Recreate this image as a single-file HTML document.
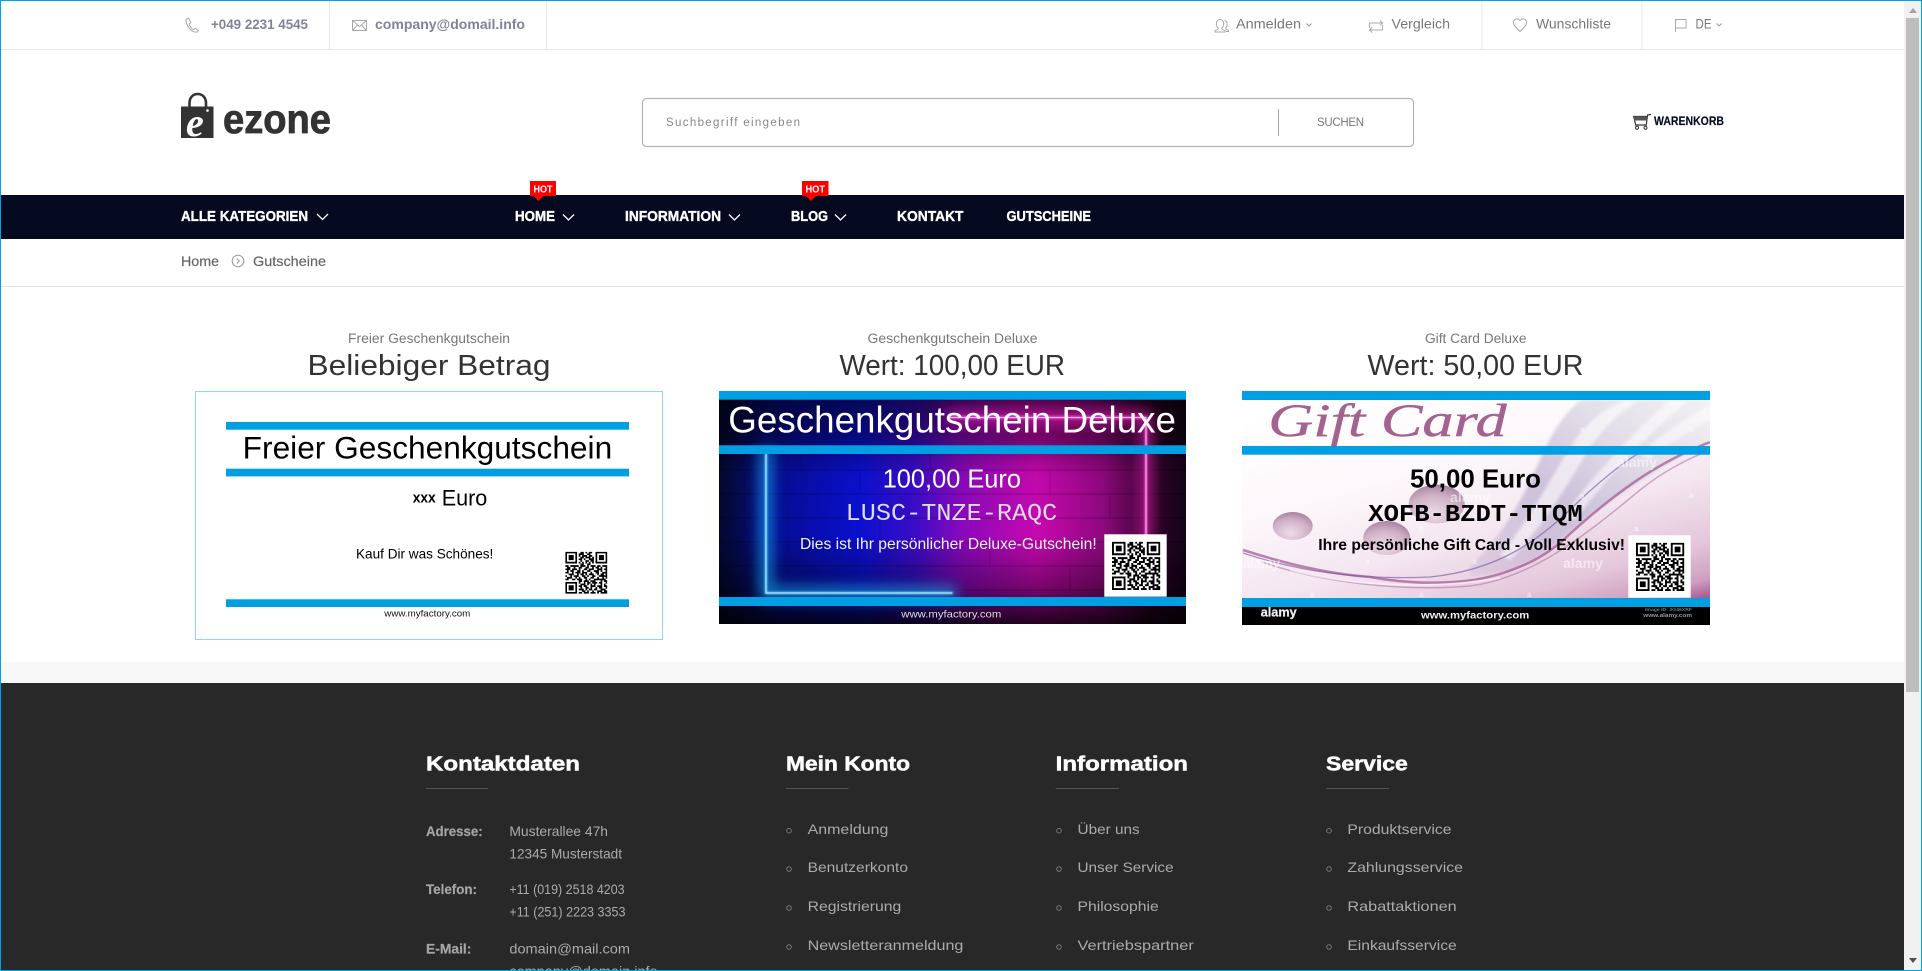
<!DOCTYPE html>
<html lang="de">
<head>
<meta charset="utf-8">
<title>Gutscheine – ezone</title>
<style>
html,body{margin:0;padding:0;width:1922px;height:971px;overflow:hidden;background:#fff}
svg{display:block}
text{font-family:"Liberation Sans",Arial,sans-serif;white-space:pre}
.tb{font-size:14px;font-weight:700;fill:#80829c}
.tr{font-size:13.5px;fill:#777}
.ln{fill:none;stroke:#a8a8a8;stroke-width:1}
.nv{font-size:14.5px;font-weight:700;fill:#fff;stroke:#fff;stroke-width:.35}
.cv{fill:none;stroke:#fff;stroke-width:1.3}
.hot{font-size:10px;font-weight:700;fill:#fff}
.bc{font-size:14px;fill:#666;stroke:#666;stroke-width:.2}
.sub{font-size:13.5px;fill:#777}
.big{font-size:28.500px;fill:#333}
.fh{font-size:20.500px;font-weight:700;fill:#fff;stroke:#fff;stroke-width:.5}
.fl{font-size:13.5px;font-weight:700;fill:#a5a5a5;stroke:#a5a5a5;stroke-width:.2}
.ft{font-size:14px;fill:#ababab}
.fk{font-size:14px;fill:#ababab}
.bu{fill:none;stroke:#777;stroke-width:1}
.ul{stroke:#555;stroke-width:1}
</style>
</head>
<body>
<svg width="1922" height="971" viewBox="0 0 1922 971" xmlns="http://www.w3.org/2000/svg">
<defs>
<symbol id="qr" viewBox="0 0 25 25">
<path fill="none" stroke="#000" stroke-width="1" d="M0 .5h7M9 .5h2M12 .5h1M14 .5h2M18 .5h7M0 1.5h1M6 1.5h1M8 1.5h3M13 1.5h2M18 1.5h1M24 1.5h1M0 2.5h1M2 2.5h3M6 2.5h1M8 2.5h1M10 2.5h3M14 2.5h2M18 2.5h1M20 2.5h3M24 2.5h1M0 3.5h1M2 3.5h3M6 3.5h1M9 3.5h2M12 3.5h3M16 3.5h1M18 3.5h1M20 3.5h3M24 3.5h1M0 4.5h1M2 4.5h3M6 4.5h1M8 4.5h2M11 4.5h1M14 4.5h3M18 4.5h1M20 4.5h3M24 4.5h1M0 5.5h1M6 5.5h1M9 5.5h1M12 5.5h2M15 5.5h2M18 5.5h1M24 5.5h1M0 6.5h7M8 6.5h1M10 6.5h1M12 6.5h1M14 6.5h1M16 6.5h1M18 6.5h7M9 7.5h2M13 7.5h2M0 8.5h2M3 8.5h4M7 8.5h1M9 8.5h3M13 8.5h1M15 8.5h3M19 8.5h2M22 8.5h3M1 9.5h2M5 9.5h1M8 9.5h2M12 9.5h2M16 9.5h1M18 9.5h2M21 9.5h1M24 9.5h1M0 10.5h3M4 10.5h3M8 10.5h1M11 10.5h2M14 10.5h3M19 10.5h3M23 10.5h2M1 11.5h1M3 11.5h2M7 11.5h2M10 11.5h1M13 11.5h2M17 11.5h3M21 11.5h1M24 11.5h1M0 12.5h2M4 12.5h1M6 12.5h3M10 12.5h3M15 12.5h1M18 12.5h2M22 12.5h3M2 13.5h3M7 13.5h1M9 13.5h2M12 13.5h1M14 13.5h3M19 13.5h1M21 13.5h2M24 13.5h1M0 14.5h1M3 14.5h1M5 14.5h3M10 14.5h2M13 14.5h1M16 14.5h2M20 14.5h3M23 14.5h2M1 15.5h3M6 15.5h1M8 15.5h1M11 15.5h2M15 15.5h2M19 15.5h1M22 15.5h1M24 15.5h1M0 16.5h2M4 16.5h2M7 16.5h3M12 16.5h1M14 16.5h1M17 16.5h7M8 17.5h2M11 17.5h3M15 17.5h2M17 17.5h1M21 17.5h1M23 17.5h2M0 18.5h7M8 18.5h1M11 18.5h1M13 18.5h2M16 18.5h2M18 18.5h1M20 18.5h2M24 18.5h1M0 19.5h1M6 19.5h1M9 19.5h3M13 19.5h1M15 19.5h1M17 19.5h1M21 19.5h1M23 19.5h1M0 20.5h1M2 20.5h3M6 20.5h1M8 20.5h2M11 20.5h2M15 20.5h3M19 20.5h3M23 20.5h2M0 21.5h1M2 21.5h3M6 21.5h1M9 21.5h1M12 21.5h2M15 21.5h1M18 21.5h1M20 21.5h2M24 21.5h1M0 22.5h1M2 22.5h3M6 22.5h1M8 22.5h3M12 22.5h1M14 22.5h2M17 22.5h2M21 22.5h2M23 22.5h1M0 23.5h1M6 23.5h1M10 23.5h2M13 23.5h1M16 23.5h1M19 23.5h3M23 23.5h2M0 24.5h7M8 24.5h2M11 24.5h3M15 24.5h3M19 24.5h1M21 24.5h4"/>
</symbol>
<linearGradient id="dxH" x1="0" x2="1" y1="0" y2="0">
<stop offset="0" stop-color="#04082c"/><stop offset=".12" stop-color="#060c90"/><stop offset=".3" stop-color="#0a10d0"/><stop offset=".42" stop-color="#3a0cc8"/><stop offset=".52" stop-color="#8a08bc"/><stop offset=".68" stop-color="#c808b0"/><stop offset=".82" stop-color="#900880"/><stop offset=".93" stop-color="#300428"/><stop offset="1" stop-color="#14031a"/>
</linearGradient>
<linearGradient id="dxV" x1="0" x2="0" y1="0" y2="1">
<stop offset="0" stop-color="#000" stop-opacity=".6"/><stop offset=".2" stop-color="#000" stop-opacity=".4"/><stop offset=".36" stop-color="#000" stop-opacity=".03"/><stop offset=".62" stop-color="#000" stop-opacity="0"/><stop offset=".85" stop-color="#000" stop-opacity=".4"/><stop offset="1" stop-color="#000" stop-opacity=".82"/>
</linearGradient>
<linearGradient id="gcBg" x1=".22" y1="0" x2=".78" y2="1">
<stop offset="0" stop-color="#fff"/><stop offset=".32" stop-color="#fdf8fb"/><stop offset=".6" stop-color="#f4e6f0"/><stop offset=".82" stop-color="#e4c6da"/><stop offset=".94" stop-color="#cf9fc0"/><stop offset="1" stop-color="#a85c92"/>
</linearGradient>
<linearGradient id="sw" x1="0" y1="1" x2="1" y2="0">
<stop offset="0" stop-color="#b4a2c8" stop-opacity=".2"/><stop offset=".4" stop-color="#c8bcd8" stop-opacity=".9"/><stop offset=".7" stop-color="#e2dee8"/><stop offset="1" stop-color="#f4f0f4"/>
</linearGradient>
<radialGradient id="ball" cx=".45" cy=".75" r=".8">
<stop offset="0" stop-color="#ecdde8"/><stop offset=".6" stop-color="#cfb0c6"/><stop offset="1" stop-color="#a07a98"/>
</radialGradient>
<filter id="gl" x="-30%" y="-30%" width="160%" height="160%"><feGaussianBlur stdDeviation="7"/></filter>
<filter id="gs" x="-30%" y="-30%" width="160%" height="160%"><feGaussianBlur stdDeviation="1"/></filter>
<filter id="sb" x="-10%" y="-10%" width="120%" height="120%"><feGaussianBlur stdDeviation="1.500"/></filter>
<filter id="qb"><feGaussianBlur stdDeviation=".25"/></filter>
<clipPath id="cDx"><rect x="719" y="391" width="467" height="233"/></clipPath>
<clipPath id="cGc"><rect x="1242" y="391" width="468" height="234"/></clipPath>
<clipPath id="cBag"><path d="M181 107h32v31h-32z"/></clipPath>
</defs>

<rect width="1922" height="971" fill="#fff"/>

<!-- top bar -->
<line x1="1" y1="49.5" x2="1904" y2="49.5" stroke="#e6e6e6"/>
<line x1="329.5" y1="1" x2="329.5" y2="49" stroke="#e8e8e8"/>
<line x1="546.5" y1="1" x2="546.5" y2="49" stroke="#e8e8e8"/>
<line x1="1482" y1="1" x2="1482" y2="49" stroke="#e8e8e8"/>
<line x1="1642" y1="1" x2="1642" y2="49" stroke="#e8e8e8"/>
<path class="ln" d="M186 19.5l2.6-1.2 2.2 4.2-1.8 1.5c.8 2.6 2.4 4.6 4.6 5.8l1.7-1.6 3.2 2.3-1.7 1.6c-5.2.6-11-6.6-10.8-12.6z"/>
<text class="tb" x="211" y="29" textLength="97" lengthAdjust="spacingAndGlyphs">+049 2231 4545</text>
<path class="ln" d="M352.5 20.5h14v10h-14zM352.5 20.5l7 6 7-6M352.5 30.5l5-5.5M366.5 30.500l-5-5.5"/>
<text class="tb" x="375" y="29" textLength="150" lengthAdjust="spacingAndGlyphs">company@domail.info</text>
<path class="ln" d="M1220 19.5c2.4 0 3.6 1.800 3.6 4.2 0 2-.8 3.500-1.800 4.300l.4 1.400 2.800 1.200v1.400h-10v-1.400l2.800-1.200.4-1.400c-1-.8-1.800-2.300-1.800-4.300 0-2.400 1.200-4.200 3.600-4.200zM1224.500 20.500c1.800.4 2.700 1.900 2.700 3.600 0 1.800-.7 3.100-1.500 3.800l.3 1.300 2.500 1.100v1.200h-2.500"/>
<text class="tr" x="1236" y="28.500" textLength="65" lengthAdjust="spacingAndGlyphs">Anmelden</text>
<path d="M1306.500 23.500l2.500 2.500 2.500-2.500" fill="none" stroke="#999"/>
<path class="ln" d="M1369.500 28v-5h12.500M1380 20.500l2.500 2.500-2.500 2.500M1382.500 25v5h-12.500M1372 27.500l-2.500 2.500 2.500 2.500"/>
<text class="tr" x="1391.500" y="28.500" textLength="58.500" lengthAdjust="spacingAndGlyphs">Vergleich</text>
<path class="ln" d="M1520 31.500c-3-3-6.500-6-6.500-9 0-2.200 1.600-3.600 3.400-3.600 1.300 0 2.400.7 3.100 1.900.7-1.200 1.800-1.900 3.100-1.900 1.800 0 3.400 1.400 3.400 3.600 0 3-3.500 6-6.500 9z"/>
<text class="tr" x="1536" y="28.500" textLength="75" lengthAdjust="spacingAndGlyphs">Wunschliste</text>
<path class="ln" d="M1675.500 32V19.500h10.500v8.500h-10.500"/>
<text class="tr" x="1695.500" y="28.500" textLength="16" lengthAdjust="spacingAndGlyphs" style="font-size:14px">DE</text>
<path d="M1716.500 23.500l2.500 2.500 2.500-2.500" fill="none" stroke="#999"/>

<!-- logo -->
<path d="M189.500 107v-4c0-12 16.500-12 16.500 0v4" fill="none" stroke="#333" stroke-width="2.6"/>
<path d="M181 106.500h32.500v31.500H181z" fill="#333"/>
<circle cx="207.500" cy="110.500" r="1.300" fill="#fff"/>
<g clip-path="url(#cBag)"><text x="186" y="136" style="font-family:'Liberation Serif',serif;font-style:italic;font-weight:700;font-size:40px;fill:#fff">e</text></g>
<text x="223" y="133" textLength="108" lengthAdjust="spacingAndGlyphs" style="font-size:41px;font-weight:700;fill:#333;stroke:#333;stroke-width:.8">ezone</text>

<!-- search -->
<rect x="642.500" y="98.500" width="771" height="48" rx="4" fill="#fff" stroke="#b2b2b2" stroke-width="1.2"/>
<line x1="1278.500" y1="109" x2="1278.500" y2="136" stroke="#aaa"/>
<text x="666" y="126" textLength="134" style="font-size:11.500px;fill:#888">Suchbegriff eingeben</text>
<text x="1317" y="126" textLength="47" style="font-size:11.500px;fill:#777">SUCHEN</text>

<!-- cart -->
<path d="M1651 114.500l-3.300.4-1.500 10.100h-10.500l-2-8.500h13.800" fill="none" stroke="#333" stroke-width="1.2"/>
<path d="M1633.500 116.500h14.500l-.7 4h-12.900z" fill="#555"/>
<circle cx="1637" cy="127.800" r="1.500" fill="none" stroke="#333"/>
<circle cx="1645.500" cy="127.800" r="1.500" fill="none" stroke="#333"/>
<text x="1654" y="125" textLength="70" lengthAdjust="spacingAndGlyphs" style="font-size:11.500px;font-weight:700;fill:#050a20;stroke:#050a20;stroke-width:.15">WARENKORB</text>

<!-- nav -->
<rect x="1" y="195" width="1903" height="44" fill="#050a20"/>
<text class="nv" x="181" y="221" textLength="127" lengthAdjust="spacingAndGlyphs">ALLE KATEGORIEN</text>
<path class="cv" d="M317 214l5.500 5.500 5.500-5.500"/>
<text class="nv" x="515" y="221" textLength="40" lengthAdjust="spacingAndGlyphs">HOME</text>
<path class="cv" d="M563 214.500l5.500 5.500 5.500-5.500"/>
<text class="nv" x="625" y="221" textLength="96" lengthAdjust="spacingAndGlyphs">INFORMATION</text>
<path class="cv" d="M729 214.500l5.500 5.500 5.500-5.500"/>
<text class="nv" x="791" y="221" textLength="37" lengthAdjust="spacingAndGlyphs">BLOG</text>
<path class="cv" d="M835 214.500l5.500 5.500 5.500-5.500"/>
<text class="nv" x="897" y="221" textLength="66.500" lengthAdjust="spacingAndGlyphs">KONTAKT</text>
<text class="nv" x="1006.500" y="221" textLength="84.500" lengthAdjust="spacingAndGlyphs">GUTSCHEINE</text>
<path d="M530 181h26v15h-12.500l-5 5-5-5H530z" fill="#f00"/>
<text class="hot" x="533.500" y="192.500" textLength="19" lengthAdjust="spacingAndGlyphs">HOT</text>
<path d="M802 181h26.500v15H816l-5 5-5-5h-4z" fill="#f00"/>
<text class="hot" x="805.500" y="192.500" textLength="19.500" lengthAdjust="spacingAndGlyphs">HOT</text>

<!-- breadcrumb -->
<text class="bc" x="181" y="266" textLength="38" lengthAdjust="spacingAndGlyphs">Home</text>
<circle cx="238" cy="261" r="5.800" fill="none" stroke="#999"/>
<path d="M236.800 258.500l2.500 2.500-2.500 2.500" fill="none" stroke="#999"/>
<text class="bc" x="253" y="266" textLength="73" lengthAdjust="spacingAndGlyphs">Gutscheine</text>
<line x1="1" y1="286.500" x2="1904" y2="286.500" stroke="#e2e2e2"/>

<!-- product headings -->
<text class="sub" x="348" y="343" textLength="162" lengthAdjust="spacingAndGlyphs">Freier Geschenkgutschein</text>
<text class="big" x="307.500" y="375" textLength="243" lengthAdjust="spacingAndGlyphs">Beliebiger Betrag</text>
<text class="sub" x="867.500" y="343" textLength="170" lengthAdjust="spacingAndGlyphs">Geschenkgutschein Deluxe</text>
<text class="big" x="839.500" y="375" textLength="225.500" lengthAdjust="spacingAndGlyphs">Wert: 100,00 EUR</text>
<text class="sub" x="1425" y="343" textLength="101.500" lengthAdjust="spacingAndGlyphs">Gift Card Deluxe</text>
<text class="big" x="1367.500" y="375" textLength="216" lengthAdjust="spacingAndGlyphs">Wert: 50,00 EUR</text>

<!-- voucher 1 -->
<rect x="195.500" y="391.500" width="467" height="248" fill="#fff" stroke="#8ad8f5"/>
<rect x="226" y="422" width="403" height="7.700" fill="#009fe3"/>
<rect x="226" y="468.700" width="403" height="7.700" fill="#009fe3"/>
<rect x="226" y="599.300" width="403" height="7.700" fill="#009fe3"/>
<text x="242.700" y="458.300" textLength="369.500" lengthAdjust="spacingAndGlyphs" style="font-size:31.500px;fill:#000">Freier Geschenkgutschein</text>
<text x="412.700" y="502.700" textLength="23" lengthAdjust="spacingAndGlyphs" style="font-size:15px;font-weight:700;fill:#000">xxx</text>
<text x="441.700" y="505.300" textLength="45.600" lengthAdjust="spacingAndGlyphs" style="font-size:22px;fill:#000">Euro</text>
<text x="356" y="558.300" textLength="137.300" lengthAdjust="spacingAndGlyphs" style="font-size:14px;fill:#000">Kauf Dir was Schönes!</text>
<use href="#qr" x="565.300" y="551.700" width="42" height="42"/>
<text x="384.300" y="616.700" textLength="86" lengthAdjust="spacingAndGlyphs" style="font-size:9.500px;fill:#111">www.myfactory.com</text>

<!-- voucher 2 -->
<g clip-path="url(#cDx)">
<rect x="719" y="391" width="467" height="233" fill="url(#dxH)"/>
<g stroke="#000" stroke-opacity=".16" stroke-width="1.5">
<path d="M719 470h467M719 494h467M719 518h467M719 542h467M719 566h467M719 590h467M719 446h467"/>
<path d="M800 454v16M860 470v24M930 454v16M1050 470v24M1110 494v24M780 518v24M880 518v24M990 542v24M1070 566v24M830 566v24" stroke-opacity=".1"/>
</g>
<rect x="719" y="391" width="467" height="233" fill="url(#dxV)"/>
<g fill="none" stroke-linecap="round">
<path d="M766 454v139h186" stroke="#12a8ff" stroke-width="12" filter="url(#gl)" opacity=".75"/>
<path d="M766 454v139h186" stroke="#5fd6ff" stroke-width="2.2" filter="url(#gs)"/>
<path d="M766 454v139h186" stroke="#c4f2ff" stroke-width="1"/>
<path d="M950 417.500h196v118" stroke="#ff20c8" stroke-width="10" filter="url(#gl)" opacity=".7"/>
<path d="M950 417.500h196v118" stroke="#ff60e0" stroke-width="2.4" filter="url(#gs)"/>
<path d="M950 417.500h196v118" stroke="#ffb0f0" stroke-width="1"/>
</g>
<rect x="719" y="391" width="467" height="8.700" fill="#009fe3"/>
<rect x="719" y="445.300" width="467" height="8.700" fill="#009fe3"/>
<rect x="719" y="597" width="467" height="9" fill="#009fe3"/>
<text x="728.300" y="432.700" textLength="447.700" lengthAdjust="spacingAndGlyphs" style="font-size:37.500px;fill:#fff">Geschenkgutschein Deluxe</text>
<text x="882.700" y="487.700" textLength="138.300" lengthAdjust="spacingAndGlyphs" style="font-size:26px;fill:#fff">100,00 Euro</text>
<text x="845.700" y="520" textLength="211.600" lengthAdjust="spacingAndGlyphs" style="font-family:'Liberation Mono',monospace;font-size:24px;fill:#dcdcf0">LUSC-TNZE-RAQC</text>
<text x="800" y="549" textLength="296.700" lengthAdjust="spacingAndGlyphs" style="font-size:15.600px;fill:#f2f2f8">Dies ist Ihr persönlicher Deluxe-Gutschein!</text>
<rect x="1104.300" y="534.300" width="62.400" height="62.400" fill="#fff"/>
<use href="#qr" x="1112" y="541.700" width="48.300" height="48.300" filter="url(#qb)"/>
<text x="901.300" y="617.700" textLength="100" lengthAdjust="spacingAndGlyphs" style="font-size:10.500px;fill:#ddd">www.myfactory.com</text>
</g>

<!-- voucher 3 -->
<g clip-path="url(#cGc)">
<rect x="1242" y="391" width="468" height="234" fill="url(#gcBg)"/>
<!-- fan -->
<path d="M1470 566C1500 540 1525 495 1540 460 1552 432 1565 412 1581 400H1710V443C1655 470 1605 500 1553 547 1530 565 1505 575 1470 576Z" fill="url(#sw)" filter="url(#sb)"/>
<path d="M1500 555C1530 520 1555 470 1575 440 1590 420 1605 408 1625 400H1640C1615 415 1600 432 1585 455 1565 490 1540 530 1510 560Z" fill="#fff" opacity=".6" filter="url(#sb)"/>
<path d="M1560 520C1590 480 1625 440 1670 400H1690C1645 435 1610 475 1575 520Z" fill="#fff" opacity=".55" filter="url(#sb)"/>
<path d="M1640 455C1660 435 1685 418 1710 405V420C1690 430 1665 445 1650 460Z" fill="#fff" opacity=".5" filter="url(#sb)"/>
<ellipse cx="1436.700" cy="504" rx="28" ry="19.500" fill="url(#ball)"/>
<ellipse cx="1292.700" cy="526" rx="20" ry="14" fill="url(#ball)"/>
<ellipse cx="1386.700" cy="538" rx="23.500" ry="17" fill="url(#ball)"/>
<g fill="none">
<path d="M1243 550C1290 565 1330 574 1370 577 1420 586 1470 584 1503 573 1530 564 1545 555 1560 543 1590 515 1620 490 1653 470 1675 457 1690 450 1710 442" stroke="#a45c94" stroke-width="2.5" opacity=".75"/>
<path d="M1243 553C1300 572 1360 580 1430 577 1500 570 1540 540 1580 500 1610 472 1630 458 1650 446" stroke="#7a58a0" stroke-width="1.300" opacity=".65"/>
<path d="M1262 562C1320 582 1400 592 1470 586 1530 578 1580 540 1640 490 1665 470 1690 458 1710 450" stroke="#b06ca0" stroke-width="1.500" opacity=".55"/>
<path d="M1290 570C1350 586 1430 590 1500 578" stroke="#fff" stroke-width="1.800" opacity=".55"/>
</g>
<g style="font-weight:700;fill:#fff;font-size:14px" opacity=".55">
<text x="1617" y="467" textLength="40" lengthAdjust="spacingAndGlyphs">alamy</text>
<text x="1450" y="502" textLength="40" lengthAdjust="spacingAndGlyphs">alamy</text>
<text x="1563" y="568" textLength="40" lengthAdjust="spacingAndGlyphs">alamy</text>
<text x="1243" y="568" textLength="37" lengthAdjust="spacingAndGlyphs">alamy</text>
</g>
<g style="font-weight:700;fill:#fff;font-size:8px" opacity=".55">
<text x="1580" y="499">a</text><text x="1689" y="498">a</text><text x="1527" y="531">a</text><text x="1634" y="531">a</text><text x="1419" y="531">a</text><text x="1472" y="564">a</text><text x="1365" y="564">a</text><text x="1310" y="597">a</text><text x="1419" y="597">a</text><text x="1527" y="597">a</text><text x="1580" y="432">a</text><text x="1689" y="432">a</text>
</g>
<rect x="1242" y="391" width="468" height="9" fill="#009fe3"/>
<rect x="1242" y="446" width="468" height="8.700" fill="#009fe3"/>
<rect x="1242" y="598" width="468" height="9" fill="#009fe3"/>
<rect x="1242" y="607" width="468" height="18" fill="#000"/>
<text x="1268.300" y="436" textLength="238.400" lengthAdjust="spacingAndGlyphs" style="font-family:'Liberation Serif',serif;font-style:italic;font-size:47px;fill:#a3628f;stroke:#a3628f;stroke-width:.4">Gift Card</text>
<text x="1410" y="487.700" textLength="131" lengthAdjust="spacingAndGlyphs" style="font-size:26px;font-weight:700;fill:#000">50,00 Euro</text>
<text x="1368.300" y="521" textLength="214.400" lengthAdjust="spacingAndGlyphs" style="font-family:'Liberation Mono',monospace;font-weight:700;font-size:24px;fill:#000">XOFB-BZDT-TTQM</text>
<text x="1318.300" y="550" textLength="306.700" lengthAdjust="spacingAndGlyphs" style="font-size:15.600px;font-weight:700;fill:#000">Ihre persönliche Gift Card - Voll Exklusiv!</text>
<rect x="1628.300" y="535.300" width="62.400" height="62.400" fill="#fff"/>
<use href="#qr" x="1636" y="542.700" width="48.300" height="48.300" filter="url(#qb)"/>
<text x="1260.700" y="616.700" textLength="36" lengthAdjust="spacingAndGlyphs" style="font-size:13px;font-weight:700;fill:#eee;stroke:#eee;stroke-width:.3">alamy</text>
<text x="1421" y="618.300" textLength="108.300" lengthAdjust="spacingAndGlyphs" style="font-size:10.500px;font-weight:700;fill:#eee">www.myfactory.com</text>
<text x="1645" y="611" textLength="47" lengthAdjust="spacingAndGlyphs" style="font-size:4.500px;font-weight:700;fill:#777">Image ID: 2G46XRF</text>
<text x="1643.300" y="617" textLength="48.700" lengthAdjust="spacingAndGlyphs" style="font-size:5px;font-weight:700;fill:#999">www.alamy.com</text>
</g>

<!-- strip above footer -->
<rect x="1" y="662" width="1903" height="21" fill="#f8f8f8"/>

<!-- footer -->
<rect x="1" y="683" width="1903" height="287" fill="#282828"/>
<text class="fh" x="426" y="770.700" textLength="154" lengthAdjust="spacingAndGlyphs">Kontaktdaten</text>
<line class="ul" x1="426" y1="788.500" x2="488" y2="788.500"/>
<text class="fh" x="786" y="770.700" textLength="124" lengthAdjust="spacingAndGlyphs">Mein Konto</text>
<line class="ul" x1="786" y1="788.500" x2="848.500" y2="788.500"/>
<text class="fh" x="1055.700" y="770.700" textLength="132.300" lengthAdjust="spacingAndGlyphs">Information</text>
<line class="ul" x1="1055.700" y1="788.500" x2="1119" y2="788.500"/>
<text class="fh" x="1326" y="770.700" textLength="81.800" lengthAdjust="spacingAndGlyphs">Service</text>
<line class="ul" x1="1326" y1="788.500" x2="1389" y2="788.500"/>

<text class="fl" x="426" y="836" textLength="56.600" lengthAdjust="spacingAndGlyphs">Adresse:</text>
<text class="ft" x="509.400" y="836" textLength="98.600" lengthAdjust="spacingAndGlyphs">Musterallee 47h</text>
<text class="ft" x="509.400" y="858.300" textLength="112.600" lengthAdjust="spacingAndGlyphs">12345 Musterstadt</text>
<text class="fl" x="426" y="894" textLength="51" lengthAdjust="spacingAndGlyphs">Telefon:</text>
<text class="ft" x="509.400" y="894" textLength="115.200" lengthAdjust="spacingAndGlyphs">+11 (019) 2518 4203</text>
<text class="ft" x="509.400" y="916.700" textLength="116.100" lengthAdjust="spacingAndGlyphs">+11 (251) 2223 3353</text>
<text class="fl" x="426" y="953.300" textLength="45.400" lengthAdjust="spacingAndGlyphs">E-Mail:</text>
<text class="ft" x="509.400" y="953.300" textLength="120.600" lengthAdjust="spacingAndGlyphs">domain@mail.com</text>
<text class="ft" x="509.400" y="976" textLength="148.200" lengthAdjust="spacingAndGlyphs">company@domain.info</text>

<g class="bu">
<circle cx="789" cy="830.700" r="2.3"/><circle cx="789" cy="869" r="2.3"/><circle cx="789" cy="908" r="2.3"/><circle cx="789" cy="947" r="2.3"/>
<circle cx="1059" cy="830.700" r="2.3"/><circle cx="1059" cy="869" r="2.3"/><circle cx="1059" cy="908" r="2.3"/><circle cx="1059" cy="947" r="2.3"/>
<circle cx="1329" cy="830.700" r="2.3"/><circle cx="1329" cy="869" r="2.3"/><circle cx="1329" cy="908" r="2.3"/><circle cx="1329" cy="947" r="2.3"/>
</g>
<text class="fk" x="807.600" y="834" textLength="80.800" lengthAdjust="spacingAndGlyphs">Anmeldung</text>
<text class="fk" x="807.600" y="872" textLength="100.400" lengthAdjust="spacingAndGlyphs">Benutzerkonto</text>
<text class="fk" x="807.600" y="911" textLength="93.700" lengthAdjust="spacingAndGlyphs">Registrierung</text>
<text class="fk" x="807.600" y="950" textLength="155.800" lengthAdjust="spacingAndGlyphs">Newsletteranmeldung</text>
<text class="fk" x="1077.500" y="834" textLength="62.200" lengthAdjust="spacingAndGlyphs">Über uns</text>
<text class="fk" x="1077.500" y="872" textLength="96.100" lengthAdjust="spacingAndGlyphs">Unser Service</text>
<text class="fk" x="1077.500" y="911" textLength="81.200" lengthAdjust="spacingAndGlyphs">Philosophie</text>
<text class="fk" x="1077.500" y="950" textLength="116.300" lengthAdjust="spacingAndGlyphs">Vertriebspartner</text>
<text class="fk" x="1347.400" y="834" textLength="104.100" lengthAdjust="spacingAndGlyphs">Produktservice</text>
<text class="fk" x="1347.400" y="872" textLength="115.600" lengthAdjust="spacingAndGlyphs">Zahlungsservice</text>
<text class="fk" x="1347.400" y="911" textLength="109.300" lengthAdjust="spacingAndGlyphs">Rabattaktionen</text>
<text class="fk" x="1347.400" y="950" textLength="109.300" lengthAdjust="spacingAndGlyphs">Einkaufsservice</text>

<!-- scrollbar -->
<rect x="1904" y="1" width="17" height="969" fill="#f1f1f1"/>
<rect x="1906" y="18" width="13" height="674" fill="#bdbdbd"/>
<path d="M1909 13l4-5 4 5z" fill="#a3a3a3"/>
<path d="M1909 958l4 5 4-5z" fill="#505050"/>

<!-- window frame -->
<rect x=".5" y=".5" width="1921" height="970" fill="none" stroke="#00a2e8"/>
</svg>
</body>
</html>
